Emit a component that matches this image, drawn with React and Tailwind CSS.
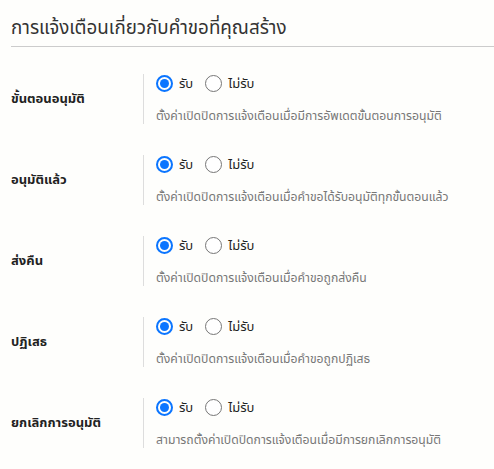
import { useState } from "react";

const items = [
    { id: 'step', label: 'ขั้นตอนอนุมัติ', desc: 'ตั้งค่าเปิดปิดการแจ้งเตือนเมื่อมีการอัพเดตขั้นตอนการอนุมัติ' },
    { id: 'approved', label: 'อนุมัติแล้ว', desc: 'ตั้งค่าเปิดปิดการแจ้งเตือนเมื่อคำขอได้รับอนุมัติทุกขั้นตอนแล้ว' },
    { id: 'returned', label: 'ส่งคืน', desc: 'ตั้งค่าเปิดปิดการแจ้งเตือนเมื่อคำขอถูกส่งคืน' },
    { id: 'rejected', label: 'ปฏิเสธ', desc: 'ตั้งค่าเปิดปิดการแจ้งเตือนเมื่อคำขอถูกปฏิเสธ' },
    { id: 'cancel', label: 'ยกเลิกการอนุมัติ', desc: 'สามารถตั้งค่าเปิดปิดการแจ้งเตือนเมื่อมีการยกเลิกการอนุมัติ' },
];

function Radio({ checked, label, onClick }) {
    return (
        <button type="button" onClick={onClick} className="flex items-center gap-[6px] cursor-pointer">
            {checked ? (
                <span className="w-[17px] h-[17px] rounded-full border-2 border-[#0b75ff] flex items-center justify-center">
                    <span className="w-[9px] h-[9px] rounded-full bg-[#0b75ff]"></span>
                </span>
            ) : (
                <span className="w-[17px] h-[17px] rounded-full border border-[#767676] bg-white"></span>
            )}
            <span className="text-[13px] text-[#222] leading-none">{label}</span>
        </button>
    )
}

function App() {
    const [values, setValues] = useState({ step: true, approved: true, returned: true, rejected: true, cancel: true });

    return (
        <div className="min-h-screen bg-[#fefefc] pl-[11px]" style={{ fontFamily: '"Noto Sans", "Noto Sans Thai", sans-serif' }}>
            <div className="h-[47px] border-b border-[#cccccc] flex items-end pb-[9px]">
                <h1 className="text-[18.8px] text-[#333] leading-none">การแจ้งเตือนเกี่ยวกับคำขอที่คุณสร้าง</h1>
            </div>

            <div className="flex flex-col gap-[31px] pt-[27px]">
                {items.map((item) =>
                    <div key={item.id} className="flex items-center">
                        <div className="w-[132px] text-[13px] font-bold text-[#222]">{item.label}</div>
                        <div className="border-l border-[#dddddd] pl-[12px] h-[50px] flex flex-col justify-between">
                            <div className="flex items-center gap-[12px] pt-[1px]">
                                <Radio checked={values[item.id]} label="รับ"
                                    onClick={() => setValues({ ...values, [item.id]: true })} />
                                <Radio checked={!values[item.id]} label="ไม่รับ"
                                    onClick={() => setValues({ ...values, [item.id]: false })} />
                            </div>
                            <p className="text-[12.2px] text-[#777] leading-none pb-[2px]">{item.desc}</p>
                        </div>
                    </div>
                )}
            </div>
        </div>
    )
}

export default App;
